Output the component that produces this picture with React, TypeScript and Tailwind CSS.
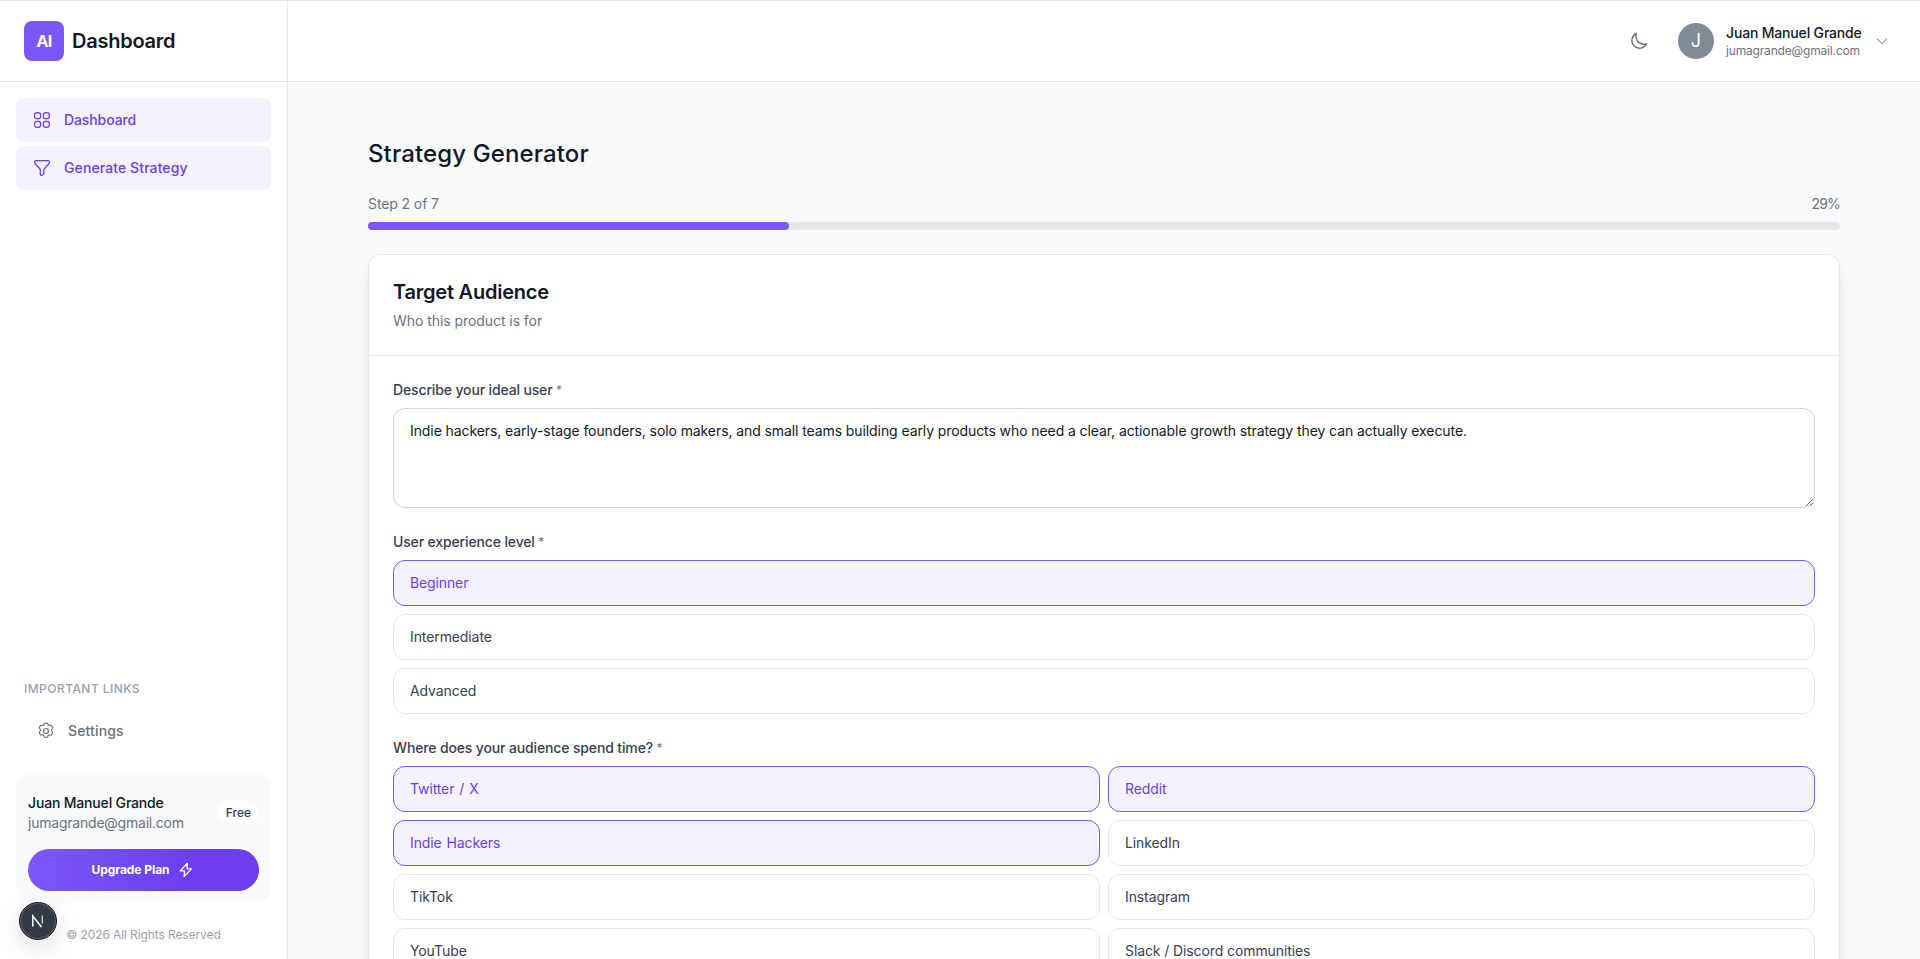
import { useState } from "react";

const channels = [
  "Twitter / X",
  "Reddit",
  "Indie Hackers",
  "LinkedIn",
  "TikTok",
  "Instagram",
  "YouTube",
  "Slack / Discord communities",
];

const levels = ["Beginner", "Intermediate", "Advanced"];

function GridIcon() {
  return (
    <svg width="20" height="20" viewBox="0 0 20 20" fill="none" stroke="currentColor" strokeWidth="1.25">
      <rect x="2.6" y="2.6" width="6" height="6" rx="2.2" />
      <rect x="11.3" y="2.6" width="6" height="6" rx="2.2" />
      <rect x="2.6" y="11.3" width="6" height="6" rx="2.2" />
      <rect x="11.3" y="11.3" width="6" height="6" rx="2.2" />
    </svg>
  );
}

function FunnelIcon() {
  return (
    <svg width="20" height="20" viewBox="0 0 20 20" fill="none" stroke="currentColor" strokeWidth="1.25" strokeLinejoin="round">
      <path d="M4 2.6h12c.8 0 1.400.6 1.400 1.400 0 .9-.3 1.700-.9 2.300l-4 4.200c-.5.6-.7 1.200-.7 1.900v2.800c0 .5-.2.900-.6 1.100l-1.400.9c-.7.4-1.500 0-1.500-.8v-4c0-.7-.2-1.300-.7-1.900l-4.100-4.200c-.6-.6-.9-1.400-.9-2.300 0-.8.6-1.400 1.400-1.400z" />
    </svg>
  );
}

function GearIcon() {
  return (
    <svg width="20" height="20" viewBox="0 0 24 24" fill="none" stroke="currentColor" strokeWidth="1.4" strokeLinecap="round" strokeLinejoin="round">
      <path d="M9.800 3.600c.3-.7.800-1.100 1.500-1.100h1.400c.7 0 1.200.4 1.500 1.100l.4 1c.2.500.8.800 1.300.7l1.300-.2c.7-.1 1.300.2 1.700.8l.8 1.300c.3.600.3 1.200-.1 1.800l-.8 1.100c-.4.500-.4 1.200 0 1.700l.8 1.100c.4.600.4 1.300.1 1.900l-.8 1.300c-.4.600-1 .900-1.700.8l-1.300-.2c-.5-.1-1.100.2-1.300.7l-.4 1.100c-.3.700-.8 1.100-1.500 1.100h-1.400c-.7 0-1.200-.4-1.500-1.100l-.4-1.100c-.2-.5-.8-.8-1.300-.7l-1.300.2c-.7.100-1.300-.2-1.700-.8l-.8-1.300c-.3-.6-.3-1.300.1-1.900l.8-1.100c.4-.5.4-1.200 0-1.700l-.8-1.100c-.4-.6-.4-1.200-.1-1.800l.8-1.300c.4-.6 1-.9 1.700-.8l1.300.2c.5.100 1.100-.2 1.300-.7z" />
      <circle cx="12" cy="12" r="3" />
    </svg>
  );
}

function MoonIcon() {
  return (
    <svg width="20" height="20" viewBox="0 0 20 20" fill="none" stroke="currentColor" strokeWidth="1.4" strokeLinecap="round" strokeLinejoin="round">
      <path d="M7.400 2.500a7.700 7.700 0 1 0 10.200 10.200C12 15 5.400 9.600 7.400 2.500z" />
    </svg>
  );
}

function BoltIcon() {
  return (
    <svg width="16" height="16" viewBox="0 0 16 16" fill="none" stroke="currentColor" strokeWidth="1.3" strokeLinejoin="round">
      <path d="M9.300 1.300 2.300 8.900h4.300l-.5 5.700 7.400-7.700H9.100z" />
    </svg>
  );
}

function Option({ label, active, onClick }: { label: string; active: boolean; onClick: () => void }) {
  return (
    <button
      onClick={onClick}
      className={
        active
          ? "h-[46px] rounded-xl border border-[#7b57f8] bg-[#f4f2ff] px-4 text-left text-sm tracking-[-0.12px] [word-spacing:1.2px] text-[#6d3ee8]"
          : "h-[46px] rounded-xl border border-gray-200 bg-white px-4 text-left text-sm tracking-[-0.1px] text-gray-700"
      }
    >
      {label}
    </button>
  );
}

function Label({ text }: { text: string }) {
  return (
    <label className="mb-2 block h-5 text-sm font-medium tracking-[-0.14px] text-gray-700">
      {text} <span className="align-[1px] text-xs font-normal text-gray-500">*</span>
    </label>
  );
}

function Sidebar() {
  return (
    <aside className="flex w-72 shrink-0 flex-col border-r border-gray-200 bg-white">
      <div className="flex h-[81px] shrink-0 items-center gap-2 border-b border-gray-200 px-6">
        <div className="flex size-10 items-center justify-center rounded-lg bg-[#7b57f8] pb-px text-base font-bold tracking-[-0.6px] text-white">AI</div>
        <span className="pb-px text-xl font-semibold tracking-[-0.25px] text-gray-900">Dashboard</span>
      </div>

      <nav className="flex flex-col gap-1 px-4 pt-4 text-sm font-medium text-[#6d3ee8]">
        <a className="flex h-11 items-center gap-3 rounded-lg bg-[#f4f2ff] px-4 tracking-[-0.1px]">
          <GridIcon /> Dashboard
        </a>
        <a className="flex h-11 items-center gap-3 rounded-lg bg-[#f4f2ff] px-4 tracking-[0.1px]">
          <FunnelIcon /> Generate Strategy
        </a>
      </nav>

      <div className="mt-auto px-4">
        <p className="px-2 text-xs font-medium uppercase leading-4 tracking-[0.45px] text-gray-400">Important links</p>
        <a className="mt-3 flex h-11 items-center gap-3 px-5 text-sm font-medium tracking-[0.15px] text-gray-500">
          <GearIcon /> Settings
        </a>
      </div>

      <div className="mx-4 mt-5 h-[130px] shrink-0 rounded-2xl bg-gray-50 px-3 pt-5">
        <div className="flex items-center justify-between">
          <div className="text-sm leading-5">
            <p className="font-medium tracking-[-0.17px] text-gray-900">Juan Manuel Grande</p>
            <p className="tracking-[-0.22px] text-gray-500">jumagrande@gmail.com</p>
          </div>
          <span className="rounded-full bg-white px-2 py-0.5 text-xs font-medium text-gray-700">Free</span>
        </div>
        <button className="mt-4 flex h-[42px] w-full items-center justify-center gap-2 rounded-full bg-linear-to-r from-[#7b57f8] to-[#6c3eee] to-70% pr-0.5 text-xs font-bold tracking-[-0.05px] text-white">
          Upgrade Plan <BoltIcon />
        </button>
      </div>
      <p className="mt-6 mb-4 text-center text-xs leading-4 tracking-[-0.1px] text-gray-400">© 2026 All Rights Reserved</p>
    </aside>
  );
}

function Header() {
  return (
    <header className="flex h-[81px] shrink-0 items-center justify-end border-b border-gray-200 bg-white pr-[30px]">
      <button className="mr-[29px] text-gray-500">
        <MoonIcon />
      </button>
      <div className="flex size-9 items-center justify-center rounded-full bg-[#808b96] text-lg text-white">J</div>
      <div className="ml-3 w-[136px] whitespace-nowrap">
        <p className="mb-0.5 text-sm font-medium leading-[17px] tracking-[-0.17px] text-gray-900">Juan Manuel Grande</p>
        <p className="text-xs leading-4 tracking-[-0.17px] text-gray-500">jumagrande@gmail.com</p>
      </div>
      <svg className="ml-3 text-gray-400" width="16" height="16" viewBox="0 0 16 16" fill="none" stroke="currentColor" strokeWidth="1.2">
        <path d="m3 5.700 5 5 5-5" />
      </svg>
    </header>
  );
}

export default function App() {
  const [level, setLevel] = useState("Beginner");
  const [selected, setSelected] = useState(["Twitter / X", "Reddit", "Indie Hackers"]);
  const [idealUser, setIdealUser] = useState(
    "Indie hackers, early-stage founders, solo makers, and small teams building early products who need a clear, actionable growth strategy they can actually execute."
  );

  const toggle = (name: string) => {
    setSelected(selected.includes(name) ? selected.filter((s) => s !== name) : [...selected, name]);
  };

  return (
    <div className="flex h-screen overflow-hidden border-t border-gray-200 bg-gray-50 font-['Inter',sans-serif]">
      <Sidebar />
      <div className="flex min-w-0 flex-1 flex-col">
        <Header />
        <main className="min-h-0 flex-1 overflow-hidden px-20 pt-14">
          <h1 className="mb-6 text-2xl font-medium tracking-[0.12px] text-gray-900">Strategy Generator</h1>
          <div className="mb-2 flex justify-between text-sm text-gray-500">
            <span className="tracking-[-0.1px]">Step 2 of 7</span>
            <span className="tracking-[-0.8px]">29%</span>
          </div>
          <div className="mb-6 h-2 rounded-full bg-gray-200">
            <div className="h-2 rounded-full bg-[#7b57f8]" style={{ width: `${(2 / 7) * 100}%` }} />
          </div>

          <section className="rounded-xl border border-gray-200 bg-white shadow-lg shadow-black/10">
            <div className="border-b border-gray-200 p-6">
              <h2 className="mb-[5px] text-xl font-semibold leading-[27px] tracking-[-0.22px] text-gray-900">Target Audience</h2>
              <p className="text-sm tracking-[-0.06px] text-gray-500">Who this product is for</p>
            </div>
            <div className="flex flex-col gap-6 p-6">
              <div>
                <Label text="Describe your ideal user" />
                <textarea
                  value={idealUser}
                  onChange={(e) => setIdealUser(e.target.value)}
                  className="block h-[100px] w-full resize-y rounded-xl border border-gray-300 px-4 py-3 text-sm tracking-[-0.09px] text-gray-900"
                />
              </div>
              <div>
                <Label text="User experience level" />
                <div className="grid gap-2">
                  {levels.map((l) => (
                    <Option key={l} label={l} active={l === level} onClick={() => setLevel(l)} />
                  ))}
                </div>
              </div>
              <div>
                <Label text="Where does your audience spend time?" />
                <div className="grid grid-cols-2 gap-2">
                  {channels.map((c) => (
                    <Option key={c} label={c} active={selected.includes(c)} onClick={() => toggle(c)} />
                  ))}
                </div>
              </div>
            </div>
          </section>
        </main>
      </div>

      {/* dev tools button */}
      <div className="fixed bottom-[19px] left-[19px] flex size-[38px] items-center justify-center rounded-full border border-gray-900 bg-[#343b46] shadow-[0_8px_24px_rgba(0,0,0,0.12)] ring-1 ring-gray-400/40 ring-inset">
        <svg width="14" height="14" viewBox="0 0 14 14" fill="none" stroke="white" strokeWidth="1.5">
          <path d="M1.800 12.500V2L10.500 13" />
          <path d="M11.300 1.500v8" strokeOpacity=".7" />
        </svg>
      </div>
    </div>
  );
}
